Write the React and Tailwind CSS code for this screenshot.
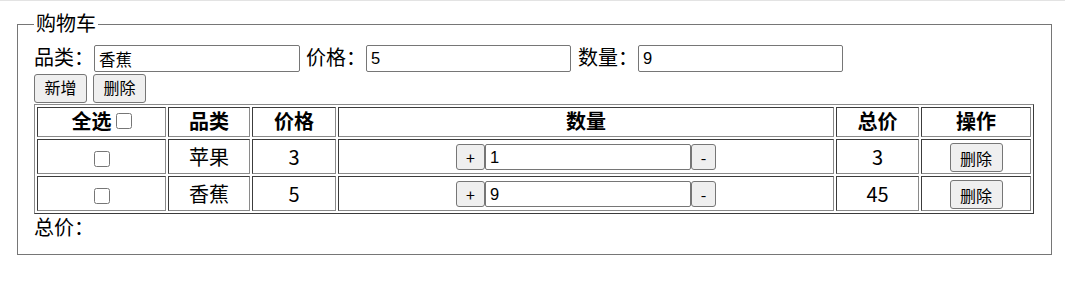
import React, { useState } from "react";

const cjk = "font-['Liberation_Sans','Noto_Sans_CJK_SC',sans-serif]";

const App = () => {
  const [rows] = useState([
    { name: "苹果", price: 3, count: 1 },
    { name: "香蕉", price: 5, count: 9 },
  ]);

  const th =
    "border border-t-[#3c3c3c] border-l-[#3c3c3c] border-b-[#8a8a8a] border-r-[#8a8a8a] p-0 text-center font-bold text-[20px] leading-[28px] text-black";
  const td =
    "border border-t-[#3c3c3c] border-l-[#3c3c3c] border-b-[#8a8a8a] border-r-[#8a8a8a] p-0 text-center text-[20px] leading-[28px] text-black font-['Noto_Sans_CJK_SC',sans-serif]";
  const btn =
    "bg-[#efefef] border border-[#767676] rounded-[3px] text-[16px] text-black leading-none";
  const input =
    "bg-white border border-[#767676] rounded-[2px] px-[4px] text-[16.5px] font-['Liberation_Sans','Noto_Sans_CJK_SC',sans-serif] text-black outline-none";

  return (
    <div className={`w-[1065px] h-[290px] bg-white border-t border-[#e3e3e3] ${cjk}`}>
      <fieldset className="ml-[17px] mt-[9px] w-[1035px] border border-[#767676] px-[16px] pb-[12px]">
        <legend className="px-[2px] text-[20px] leading-[28px] text-black">购物车</legend>

        {/* 输入行 */}
        <div className="flex items-center pt-[7px] text-[20px] text-black">
          <span className="w-[60px] leading-[27px]">品类：</span>
          <input className={`${input} w-[206px] h-[27px]`} defaultValue="香蕉" />
          <span className="ml-[6px] w-[60px] leading-[27px]">价格：</span>
          <input className={`${input} w-[205px] h-[27px]`} defaultValue="5" />
          <span className="ml-[7px] w-[60px] leading-[27px]">数量：</span>
          <input className={`${input} w-[205px] h-[27px]`} defaultValue="9" />
        </div>

        <div className="flex gap-[6px] mt-[2px]">
          <button className={`${btn} w-[53px] h-[29px]`}>新增</button>
          <button className={`${btn} w-[53px] h-[29px]`}>删除</button>
        </div>

        <table className="mt-[1px] w-[1000px] table-fixed border-separate border-spacing-[2px] border border-t-[#8a8a8a] border-l-[#8a8a8a] border-b-[#3c3c3c] border-r-[#3c3c3c]">
          <colgroup>
            <col className="w-[129px]" />
            <col className="w-[82px]" />
            <col className="w-[84px]" />
            <col className="w-[496px]" />
            <col className="w-[83px]" />
            <col className="w-[110px]" />
          </colgroup>
          <thead>
            <tr className="h-[30px]">
              <th className={th}>
                <span className="inline-flex items-center gap-[4px]">
                  全选
                  <input type="checkbox" className="w-[16px] h-[16px] m-0 -mt-[2px]" />
                </span>
              </th>
              <th className={th}>品类</th>
              <th className={th}>价格</th>
              <th className={th}>数量</th>
              <th className={th}>总价</th>
              <th className={th}>操作</th>
            </tr>
          </thead>
          <tbody>
            {rows.map((row) => (
              <tr key={row.name} className="h-[35px]">
                <td className={td}>
                  <input type="checkbox" className="w-[16px] h-[16px] m-0 align-middle" />
                </td>
                <td className={td}>{row.name}</td>
                <td className={td}>{row.price}</td>
                <td className={td}>
                  <div className="flex justify-center items-center">
                    <button className={`${btn} w-[29px] h-[26px]`}>+</button>
                    <input className={`${input} w-[206px] h-[26px]`} defaultValue={row.count} />
                    <button className={`${btn} w-[25px] h-[26px]`}>-</button>
                  </div>
                </td>
                <td className={td}>{row.price * row.count}</td>
                <td className={td}>
                  <button className={`${btn} w-[53px] h-[29px] align-middle`}>删除</button>
                </td>
              </tr>
            ))}
          </tbody>
        </table>

        <div className="text-[20px] leading-[28px] text-black">总价：</div>
      </fieldset>
    </div>
  );
};

export default App;
